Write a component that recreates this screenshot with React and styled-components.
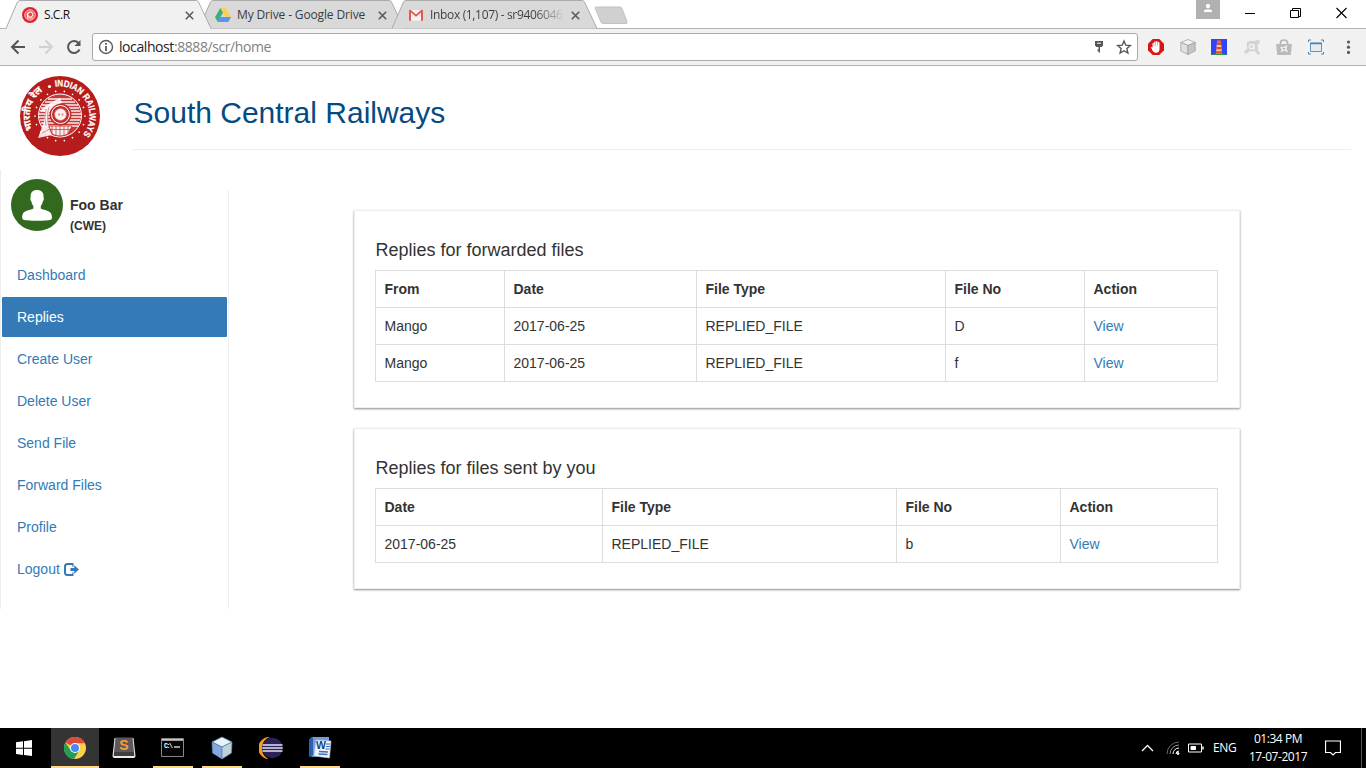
import React from "react";
import styled, { createGlobalStyle } from "styled-components";

const GlobalStyle = createGlobalStyle`
  *, *::before, *::after { box-sizing: border-box; }
  html, body { margin: 0; padding: 0; background: #fff; overflow: hidden; }
  body { font-family: "Liberation Sans", Arial, sans-serif; font-size: 14px; line-height: 20px; color: #333; }
  svg { display: block; flex: none; }
`;

const uiFont = `"Open Sans", "Noto Sans", sans-serif`;

const Screen = styled.div`
  width: 1366px;
  height: 768px;
  display: flex;
  flex-direction: column;
`;

/* ---------- browser window ---------- */

const TabStrip = styled.header`
  height: 29px;
  display: flex;
  align-items: flex-start;
  padding-left: 6px;
  border-bottom: 1px solid #b3b3b3;
  background: #fff;
`;

const TabBox = styled.div`
  position: relative;
  z-index: ${(p) => (p.$active ? 3 : 1)};
  width: 205px;
  height: 29px;
  flex: none;
  margin-right: -12px;
  padding: 1px 0 0 16px;
  display: flex;
  align-items: center;
`;

const TabShape = styled.svg`
  position: absolute;
  left: 0;
  top: 0;
  z-index: -1;
`;

const TabTitle = styled.span`
  width: 133px;
  margin-left: 6px;
  font: 12px/16px ${uiFont};
  letter-spacing: ${(p) => p.$spacing};
  color: ${(p) => (p.$active ? "#111" : "#3c3c3c")};
  white-space: nowrap;
  ${(p) => p.$fade && `
    color: transparent;
    background: linear-gradient(90deg, #3c3c3c 105px, rgba(60, 60, 60, 0.1) 132px);
    background-clip: text;
    -webkit-background-clip: text;
  `}
`;

const TabClose = styled.svg`
  margin-left: 7.5px;
`;

const NewTab = styled.svg`
  margin: 6px 0 0 8px;
`;

const WindowControls = styled.div`
  margin-left: auto;
  height: 28px;
  display: flex;
  align-items: flex-start;
`;

const UserBadge = styled.div`
  width: 24px;
  height: 19px;
  background: #b1b1b1;
  margin-right: 25px;
`;

const ControlIcon = styled.svg`
  margin: 7px ${(p) => p.$gap}px 0 0;
`;

const Toolbar = styled.div`
  height: 37px;
  display: flex;
  align-items: center;
  background: #f1f1f1;
  border-bottom: 1px solid #b3b3b3;
  padding: 0 9px 0 10px;
`;

const NavButtons = styled.div`
  width: 82px;
  display: flex;
  gap: 12px;
`;

const AddressBar = styled.div`
  width: 1046px;
  height: 28px;
  display: flex;
  align-items: center;
  padding: 0 5px;
  background: #fff;
  border: 1px solid #a9a9a9;
  border-radius: 3px;
`;

const Url = styled.div`
  margin-left: 5px;
  font: 14px/20px ${uiFont};
  letter-spacing: -0.42px;
  color: #808080;
  flex: 1;
  b { font-weight: 400; color: #222; }
`;

const BarIcon = styled.svg`
  margin-left: 9px;
`;

const Extensions = styled.div`
  flex: 1;
  display: flex;
  align-items: center;
  justify-content: space-between;
  padding-left: 10px;
`;

/* ---------- page ---------- */

const Page = styled.main`
  height: 662px;
  background: #fff;
`;

const Banner = styled.div`
  display: flex;
  height: 104px;
  padding: 10px 15px 0 20px;
`;

const BannerTitle = styled.h1`
  flex: 1;
  height: 74px;
  margin: 0 0 0 33px;
  padding: 20px 0 0 0.5px;
  font-size: 30px;
  line-height: 33px;
  font-weight: 400;
  color: #044a83;
  border-bottom: 1px solid #eee;
`;

const Body = styled.div`
  display: flex;
  align-items: flex-start;
`;

const Sidebar = styled.aside`
  width: 229px;
  height: 439px;
  padding: 9px 0 0 1px;
  border-left: 1px solid #eee;
  background: linear-gradient(#eee, #eee) right 20px / 1px 419px no-repeat;
`;

const Profile = styled.div`
  display: flex;
  height: 76px;
  padding-left: 9px;
`;

const ProfileName = styled.div`
  margin: 16px 0 0 7px;
  font-weight: 700;
  small { display: block; font-size: 12px; line-height: 22px; }
`;

const NavList = styled.nav`
  display: flex;
  flex-direction: column;
  gap: 2px;
`;

const NavItem = styled.a`
  display: flex;
  align-items: center;
  width: 225px;
  height: 40px;
  padding-left: 15px;
  border-radius: 1px;
  color: ${(p) => (p.$active ? "#fff" : "#337ab7")};
  background: ${(p) => (p.$active ? "#337ab7" : "transparent")};
  svg { margin-left: 4px; }
`;

const Content = styled.section`
  width: 886px;
  margin: 40px 0 0 125px;
  display: flex;
  flex-direction: column;
  gap: 20px;
`;

const Card = styled.article`
  height: ${(p) => p.$height}px;
  padding: 29px 21px 0;
  background: #fff;
  border: 1px solid #eee;
  box-shadow: 0 1px 2px rgba(0, 0, 0, 0.45);
`;

const CardTitle = styled.h4`
  margin: 0 0 10px -0.5px;
  font-size: 18px;
  line-height: 20px;
  font-weight: 400;
`;

const Table = styled.table`
  width: 843px;
  margin-left: -1px;
  table-layout: fixed;
  border-collapse: separate;
  border-spacing: 0;
  border: solid #ddd;
  border-width: 1px 0 0 1px;
`;

const Cell = styled.td`
  width: ${(p) => (p.$width ? `${p.$width}px` : "auto")};
  height: 37px;
  padding: 8px 8px 8px 8.5px;
  text-align: left;
  font-weight: ${(p) => (p.as === "th" ? 700 : 400)};
  border: solid #ddd;
  border-width: 0 1px 1px 0;
`;

const Link = styled.a`
  color: #337ab7;
`;

/* ---------- taskbar ---------- */

const Taskbar = styled.footer`
  height: 40px;
  display: flex;
  background: #000;
  color: #fff;
  font: 12px/18px ${uiFont};
`;

const Task = styled.div`
  width: ${(p) => p.$width}px;
  margin-left: ${(p) => p.$gap}px;
  height: 40px;
  display: flex;
  align-items: center;
  justify-content: center;
  padding-top: 1px;
  background: ${(p) => (p.$active ? "#343434" : "none")};
  border-bottom: 2px solid ${(p) => (p.$open ? "#ffd983" : "transparent")};
`;

const Tray = styled.div`
  margin-left: auto;
  display: flex;
  align-items: center;
  padding-right: 4px;
`;

const Language = styled.span`
  width: 25px;
  margin-left: 9px;
  letter-spacing: -0.3px;
`;

const Clock = styled.div`
  width: 66px;
  margin-left: 7px;
  text-align: center;
  white-space: nowrap;
  letter-spacing: -0.45px;
`;

const Notifications = styled.svg`
  margin: 0 20px 0 14px;
`;

const ShowDesktop = styled.i`
  width: 1px;
  height: 40px;
  background: #555;
`;

/* ---------- drawings ---------- */

const RailwayLogo = () => {
  const dots = Array.from({ length: 18 }, (_, i) => (i * 20 * Math.PI) / 180);
  return (
    <svg width="80" height="80" viewBox="0 0 80 80">
      <circle cx="40" cy="40" r="40" fill="#b71c1c" />
      <defs>
        <path id="ringRight" d="M35.200 10.700 A29.800 29.800 0 0 1 61 61" />
        <path id="ringLeft" d="M13 53.500 A30 30 0 0 1 30 11.500" />
      </defs>
      <g fill="#fff" stroke="#fff" strokeWidth=".25" fontWeight="700" fontFamily="Liberation Sans, sans-serif">
        <text fontSize="9.200">
          <textPath href="#ringRight" textLength="71" lengthAdjust="spacingAndGlyphs">INDIAN RAILWAYS</textPath>
        </text>
        <text fontSize="9.600" fontFamily="Noto Sans, FreeSans, sans-serif">
          <textPath href="#ringLeft">भारतीय रेल</textPath>
        </text>
      </g>
      <circle cx="29.500" cy="10.500" r="1.600" fill="#fff" />
      {dots.map((a) => (
        <circle key={a} cx={40 + 25 * Math.cos(a)} cy={40 + 25 * Math.sin(a)} r=".85" fill="#fff" />
      ))}
      <circle cx="40" cy="39.5" r="21.5" fill="#c43a3a" stroke="#fff" />
      <path d="M28 23h24M25 26h30M22 29h36M21 32h38M20 35h40M19 38h42M19 41h42M20 44h40M21 47h38M22 50h36" stroke="#fff" strokeWidth="1.3" opacity=".9" />
      <circle cx="40.500" cy="38.500" r="11" fill="#c02c2c" />
      <circle cx="40.500" cy="38.500" r="9" fill="none" stroke="#fff" strokeWidth="1" />
      <circle cx="40.500" cy="38.500" r="6" fill="#fbeeee" stroke="#d46a6a" strokeWidth=".8" />
      <path d="M38 37.500h2v2h-2zM41.500 37.500h2v2h-2z" fill="#b71c1c" opacity=".45" />
      <path d="M29 50h23l-4 8q-8 4-16 0z" fill="#fbeaea" stroke="#b71c1c" strokeWidth=".7" />
      <path d="M32 50v8M36 50v9M40 50v10M44 50v9M48 50v8M30 53.500h21" stroke="#b71c1c" strokeWidth=".6" />
      <path d="M20 35q6-6 12-9l8-4 2 5q-6 1-9 4-5 4-5 13 1 10 4 15l-14 3 3-8 3-8 1-10z" fill="#fff" opacity=".88" />
      <path d="M26 33q-2 9 0 17M29 31q-3 8 0 21M22 57l8-4" stroke="#c94c4c" strokeWidth=".6" fill="none" />
    </svg>
  );
};

const Avatar = () => (
  <svg width="52" height="52" viewBox="0 0 52 52">
    <circle cx="26" cy="26" r="26" fill="#33691e" />
    <path
      fill="#fff"
      d="M26 11c-4.200 0-6.700 2.300-6.300 7-.8.900-.3 3.500.7 4.500.4 2.400 1.200 3.600 2 4.500v2.500c-1.800 1.300-8.500 2-10.200 4.500-1.100 1.700-1.200 4-.7 6.200 1 .900 7.500 1.600 14.500 1.600s13.700-.7 14.700-1.600c.5-2.200.2-4.500-.9-6.200-1.700-2.500-8.200-3.200-10-4.500V27c.7-1 1.600-2.100 2-4.500 1-1 1.500-3.600.7-4.500.4-4.700-2.300-7-6.500-7z"
    />
  </svg>
);

const LogoutIcon = () => (
  <svg width="15" height="13" viewBox="0 0 15 13" fill="#337ab7">
    <path d="M9 1H3.500Q1 1 1 3.500v6Q1 12 3.500 12H9" fill="none" stroke="#337ab7" strokeWidth="2" />
    <path d="M8.200 0h1.300v3.500H8.200zM8.200 9.500h1.300V13H8.200z" />
    <path d="M6.500 5h3.700V2.200L15 6.500 10.200 10.800V8H6.500z" />
  </svg>
);

const ScrFavicon = () => (
  <svg width="16" height="16" viewBox="0 0 16 16">
    <circle cx="8" cy="8" r="8" fill="#e3212b" />
    <circle cx="8" cy="8" r="5.300" fill="#ee6c70" stroke="#f7b1b3" strokeWidth="1" />
    <circle cx="8.300" cy="7.500" r="2.500" fill="#e84850" stroke="#fff" strokeWidth="1" />
    <path d="M5 11h6M5.500 6v5" stroke="#fff" strokeWidth="1" opacity=".8" />
  </svg>
);

const DriveFavicon = () => (
  <svg width="16" height="16" viewBox="0 0 16 16">
    <path d="M5.300 1h5.400L16 10h-5.300z" fill="#fbd04f" />
    <path d="M5.300 1 0 10.200 2.700 15 8 5.700z" fill="#3fae7a" />
    <path d="M5.400 10H16l-2.700 5H2.700z" fill="#5b93ee" />
  </svg>
);

const GmailFavicon = () => (
  <svg width="16" height="16" viewBox="0 0 16 16">
    <path d="M1.500 3h13v10.500h-13z" fill="#f5f2f1" />
    <path d="M1 3.500v10.200h2V5.500l5 4.200 5-4.200v8.200h2V3.500L13.800 2.600 8 7.400 2.200 2.600z" fill="#dc5a50" />
  </svg>
);

function Tab({ active, title, icon, spacing, fade }) {
  return (
    <TabBox $active={active}>
      <TabShape width="206" height="29" viewBox="0 0 206 29">
        <path
          d="M0 28.500 11 3Q12 .5 14 .5H190.500Q192 .5 193 3L205 28.500"
          fill={active ? "#f1f1f1" : "#d9d9d9"}
          stroke="#aaa"
        />
        {active && <path d="M1 28.500H204.500" stroke="#f1f1f1" />}
      </TabShape>
      {icon}
      <TabTitle $active={active} $spacing={spacing} $fade={fade}>{title}</TabTitle>
      <TabClose width="9" height="9" viewBox="0 0 9 9">
        <path d="M.8.800 8.200 8.200M8.200.800.8 8.200" stroke="#5a5a5a" strokeWidth="1.600" />
      </TabClose>
    </TabBox>
  );
}

const ExtensionIcons = () => (
  <Extensions>
    <svg width="16" height="16" viewBox="0 0 16 16">
      <path d="M4.700 0h6.600L16 4.700v6.600L11.300 16H4.700L0 11.300V4.700z" fill="#d91515" />
      <path d="M4.500 8V4.200q.7-.8 1.300 0V7h.3V2.800q.8-.8 1.600 0V7h.3V2.400q.8-.8 1.600 0V7h.3V3.500q.8-.8 1.600 0v6.200q0 3.800-3.500 4-2.500 0-3.500-2.200L3 8.500q.5-1 1.500 0z" fill="#fff" />
    </svg>
    <svg width="16" height="16" viewBox="0 0 16 16" stroke="#999" strokeWidth=".7" strokeLinejoin="round">
      <path d="M8 .5 15.200 3.500 8 6.500 .8 3.500z" fill="#f2f2f2" />
      <path d="M.8 3.500 8 6.500v9L.8 12z" fill="#e0e0e0" />
      <path d="M15.200 3.500 8 6.500v9l7.200-3.500z" fill="#c4c4c4" />
    </svg>
    <svg width="16" height="16" viewBox="0 0 16 16">
      <path d="M0 0h16v16H0z" fill="#3045f5" />
      <path d="M0 16q8-4 16 0z" fill="#2c9c35" />
      <path d="M6 3h4l1 11.500H5z" fill="#f2c9a0" />
      <path d="M5.900 4h4.200l.2 2H5.700zM5.500 8h5l.2 2.300H5.300zM5.100 12.300h5.800l.1 2H5z" fill="#e8452c" />
      <path d="M6 1.500h4V4H6z" fill="#f36b2c" />
    </svg>
    <svg width="18" height="16" viewBox="0 0 18 16">
      <path d="M4 3q4-2 8.500-1 1-2 3-1 2.500 1 1 3l-2 1.500q1 4 0 5.500l2 2q1 2-1 2.500-2 0-3-3-4-1-6.500 0-2 3-4 2-2-1 0-3l2.500-2q-1.500-3-.5-6.500z" fill="#d3d3d3" />
      <circle cx="8.500" cy="7.500" r="2.200" fill="none" stroke="#f4f4f4" strokeWidth="1.300" />
      <path d="M11 5v5h1" stroke="#f4f4f4" strokeWidth="1.200" fill="none" />
    </svg>
    <svg width="16" height="16" viewBox="0 0 16 16">
      <path d="M4.500 6V4q0-3 3.500-3t3.500 3v2" fill="none" stroke="#b5b5b5" strokeWidth="1.700" />
      <path d="M0 5h16l-1.300 11H1.300z" fill="#bababa" />
      <path d="m4 8 3.500 0 4-2-1 3.500 1.500 4-3.500-2-4 2 1.200-3z" fill="#f2f2f2" />
      <circle cx="8" cy="9.800" r="1" fill="#aaa" />
    </svg>
    <svg width="16" height="16" viewBox="0 0 16 16" fill="none">
      <path d="M2.500 4h11v8.500h-11z" fill="#e5edf3" stroke="#6793b8" />
      <path d="M2 4.500h12" stroke="#4485bb" strokeWidth="1.500" />
      <path d="M.5 3V1H3M13 1h2.500v2M.5 13v2H3M13 15h2.500v-2" stroke="#4485bb" strokeWidth="1" />
    </svg>
    <svg width="18" height="16" viewBox="0 0 18 16" fill="#5a5a5a">
      <circle cx="9.500" cy="3" r="1.600" /><circle cx="9.500" cy="8.200" r="1.600" /><circle cx="9.500" cy="13.400" r="1.600" />
    </svg>
  </Extensions>
);

const Browser = () => (
  <>
    <TabStrip>
      <Tab active title="S.C.R" icon={<ScrFavicon />} spacing="-0.45px" />
      <Tab title="My Drive - Google Drive" icon={<DriveFavicon />} spacing="-0.14px" />
      <Tab title="Inbox (1,107) - sr9406046" icon={<GmailFavicon />} spacing="-0.34px" fade />
      <NewTab width="36" height="19" viewBox="0 0 36 19">
        <path d="M3 1H27Q28.500 1 29 2.500l5 13q.5 2-1 2H10Q8.500 17.500 8 16L2.500 3Q1.500 1 3 1z" fill="#d0d0d0" stroke="#c2c2c2" />
      </NewTab>
      <WindowControls>
        <UserBadge>
          <svg width="24" height="19" viewBox="0 0 24 19" fill="#fff">
            <circle cx="12" cy="6" r="2.200" />
            <path d="M8 12V11q0-1.800 4-1.800t4 1.800v1z" />
          </svg>
        </UserBadge>
        <ControlIcon $gap={34} width="11" height="12" viewBox="0 0 11 12"><path d="M0 6.500h10" stroke="#000" /></ControlIcon>
        <ControlIcon $gap={35} width="11" height="12" viewBox="0 0 11 12" fill="none" stroke="#000">
          <path d="M2.500 3V1.500h8v8H9M.5 3.500h8v7h-8z" />
        </ControlIcon>
        <ControlIcon $gap={19} width="11" height="12" viewBox="0 0 11 12"><path d="m.5 1 10 10m0-10-10 10" stroke="#000" strokeWidth="1.100" /></ControlIcon>
      </WindowControls>
    </TabStrip>
    <Toolbar>
      <NavButtons>
        <svg width="16" height="16" viewBox="0 0 16 16" fill="none" stroke="#555" strokeWidth="2"><path d="M15 8H2.500M8.500 1.500 2 8l6.500 6.500" /></svg>
        <svg width="16" height="16" viewBox="0 0 16 16" fill="none" stroke="#d0d0d0" strokeWidth="2"><path d="M1 8h12.500M7.500 1.500 14 8l-6.500 6.500" /></svg>
        <svg width="16" height="16" viewBox="0 0 16 16" fill="none" stroke="#555" strokeWidth="2"><path d="M13.500 10.500A6 6 0 1 1 12.500 4" /><path d="M14.500 1v6h-6z" fill="#555" stroke="none" /></svg>
      </NavButtons>
      <AddressBar>
        <svg width="16" height="16" viewBox="0 0 16 16" fill="none" stroke="#5a5a5a">
          <circle cx="8" cy="8" r="6.500" strokeWidth="1.400" /><path d="M8 7v5M8 4v1.800" strokeWidth="1.800" />
        </svg>
        <Url><b>localhost</b>:8888/scr/home</Url>
        <BarIcon width="16" height="16" viewBox="0 0 16 16" fill="#555">
          <path d="M4 2h8v4.500L10.500 8H9v5.500H7.500V12H6.500v-1.500h1V8h-2L4 6.500z" /><path d="M6 4.200h4" stroke="#fff" />
        </BarIcon>
        <BarIcon width="16" height="16" viewBox="0 0 16 16" fill="none" stroke="#555" strokeWidth="1.400">
          <path d="m8 2 1.800 4.200 4.500.4-3.400 3 1 4.400L8 11.700 4.100 14l1-4.400-3.400-3 4.500-.4z" />
        </BarIcon>
      </AddressBar>
      <ExtensionIcons />
    </Toolbar>
  </>
);

const navItems = ["Dashboard", "Replies", "Create User", "Delete User", "Send File", "Forward Files", "Profile", "Logout"];

const cards = [
  {
    title: "Replies for forwarded files",
    height: 198,
    widths: [129, 192, 249, 139, 133],
    head: ["From", "Date", "File Type", "File No", "Action"],
    rows: [
      ["Mango", "2017-06-25", "REPLIED_FILE", "D"],
      ["Mango", "2017-06-25", "REPLIED_FILE", "f"],
    ],
  },
  {
    title: "Replies for files sent by you",
    height: 161,
    widths: [227, 294, 164, 157],
    head: ["Date", "File Type", "File No", "Action"],
    rows: [["2017-06-25", "REPLIED_FILE", "b"]],
  },
];

const RepliesCard = ({ data }) => (
  <Card $height={data.height}>
    <CardTitle>{data.title}</CardTitle>
    <Table>
      <thead>
        <tr>{data.head.map((h, i) => <Cell as="th" key={h} $width={data.widths[i]}>{h}</Cell>)}</tr>
      </thead>
      <tbody>
        {data.rows.map((row, r) => (
          <tr key={r}>
            {row.map((value, i) => <Cell key={i}>{value}</Cell>)}
            <Cell><Link>View</Link></Cell>
          </tr>
        ))}
      </tbody>
    </Table>
  </Card>
);

const ChromeIcon = () => (
  <svg width="22" height="22" viewBox="0 0 22 22">
    <circle cx="11" cy="11" r="11" fill="#fdd249" />
    <path d="M11 11 1.400 5.600A11 11 0 0 1 20.600 5.600L20.900 6.200H11z" fill="#dd4b3e" />
    <path d="M1.400 5.600A11 11 0 0 0 10 22L15.200 13.500 11 11 6.800 13.500z" fill="#209d5b" />
    <circle cx="11" cy="11" r="5" fill="#fff" />
    <circle cx="11" cy="11" r="4" fill="#4a8af4" />
  </svg>
);

const SublimeIcon = () => (
  <svg width="24" height="22" viewBox="0 0 24 22">
    <path d="M2.500 1h19l2 18q0 2-2 2h-19q-2 0-2-2z" fill="#ececec" />
    <path d="M3.500.5h17l1.500 14.500H2z" fill="#5a5a5a" />
    <path d="M2 15h20l.3 4H1.700z" fill="#3f3f3f" />
    <text x="12" y="13" fill="#fb9b37" textAnchor="middle" fontSize="14" fontWeight="700" fontFamily="Liberation Sans">S</text>
  </svg>
);

const TerminalIcon = () => (
  <svg width="24" height="19" viewBox="0 0 24 19">
    <path d="M.5.500h22v18H.5z" fill="#050505" stroke="#888" />
    <path d="M1 1h21v1.800H1z" fill="#c5c5c5" />
    <text x="3" y="9.500" fill="#fff" fontSize="6.500" fontWeight="700" textLength="9" fontFamily="Liberation Mono">C:\</text>
    <path d="M13 9h6" stroke="#fff" strokeWidth="1.200" />
  </svg>
);

const CubeIcon = () => (
  <svg width="22" height="24" viewBox="0 0 22 24" stroke="#5b83b5" strokeWidth=".7">
    <path d="M11 1 21 6 11 11 1 6z" fill="#e8f3fa" />
    <path d="M1 6 11 11v12L1.500 17z" fill="#86a8dc" />
    <path d="M21 6 11 11v12l9.500-6z" fill="#bcd3dc" />
  </svg>
);

const EclipseIcon = () => (
  <svg width="24" height="22" viewBox="0 0 24 22">
    <path d="M11 0A11 11 0 0 0 9.500 22 12 12 0 0 1 11 0z" fill="#f39a24" />
    <circle cx="13.500" cy="11" r="10.200" fill="#2c2257" />
    <path d="M3.500 8h20M3.200 11h20.500M3.500 14h20" stroke="#e5e2f1" strokeWidth="1.500" />
  </svg>
);

const WordIcon = () => (
  <svg width="24" height="23" viewBox="0 0 24 23">
    <path d="M4 1h17v18L4 21 1 19V4z" fill="#6d9fda" />
    <path d="M1 4 5 1v18l-4 2z" fill="#2b60ac" />
    <path d="m8 4 15 1-1.500 17L6 20z" fill="#eef4fb" stroke="#b2c9e5" strokeWidth=".6" />
    <path d="M11 15.500l9 .5M10.500 18l9 .5" stroke="#456fae" strokeWidth="1.300" />
    <path d="M18 8h4M18 10.500h4M17.500 13h4" stroke="#456fae" strokeWidth="1.200" />
    <text x="8" y="13" fontSize="10.500" fontWeight="700" fill="#183f87" fontFamily="Liberation Sans">W</text>
  </svg>
);

const DesktopTaskbar = () => (
  <Taskbar>
    <Task $width={48} $gap={0}>
      <svg width="16" height="16" viewBox="0 0 16 16" fill="#fff"><path d="M0 2.300 7 1.300v6.400H0zM8 1.200 16 0v7.700H8zM0 8.700h7v6.400l-7-1zM8 8.700h8V16l-8-1.100z" /></svg>
    </Task>
    <Task $width={48} $gap={3} $active $open><ChromeIcon /></Task>
    <Task $width={40} $gap={5}><SublimeIcon /></Task>
    <Task $width={40} $gap={9} $open><TerminalIcon /></Task>
    <Task $width={40} $gap={9} $open><CubeIcon /></Task>
    <Task $width={40} $gap={9}><EclipseIcon /></Task>
    <Task $width={40} $gap={9} $open><WordIcon /></Task>
    <Tray>
      <svg width="13" height="9" viewBox="0 0 13 9"><path d="m1 7 5.500-5.500L12 7" fill="none" stroke="#fff" strokeWidth="1.300" /></svg>
      <svg width="33" height="14" viewBox="0 0 33 14" fill="none" stroke="#fff">
        <path d="M13 13A12 12 0 0 1 25 1" stroke="#666" /><path d="M16 13a9 9 0 0 1 9-9" stroke="#999" />
        <path d="M19 13a6 6 0 0 1 6-6" /><path d="M22 13a3 3 0 0 1 3-3" /><circle cx="24" cy="12.500" r="1" fill="#fff" />
      </svg>
      <svg width="17" height="10" viewBox="0 0 17 10" fill="none" stroke="#fff"><path d="M1.500 1h13v8h-13z" /><path d="M4 3.500h4.500v3H4z" fill="#fff" /><path d="M16 3.500v3" strokeWidth="1.500" /></svg>
      <Language>ENG</Language>
      <Clock><div>01:34 PM</div><div>17-07-2017</div></Clock>
      <Notifications width="16" height="16" viewBox="0 0 16 16"><path d="M.5 1h15v11.500h-5L8 15l-2.500-2.500h-5z" fill="none" stroke="#fff" strokeWidth="1.200" /></Notifications>
      <ShowDesktop />
    </Tray>
  </Taskbar>
);

export default function App() {
  return (
    <Screen>
      <GlobalStyle />
      <Browser />
      <Page>
        <Banner>
          <RailwayLogo />
          <BannerTitle>South Central Railways</BannerTitle>
        </Banner>
        <Body>
          <Sidebar>
            <Profile>
              <Avatar />
              <ProfileName>Foo Bar<small>(CWE)</small></ProfileName>
            </Profile>
            <NavList>
              {navItems.map((name) => (
                <NavItem key={name} $active={name === "Replies"}>
                  {name}{name === "Logout" && <LogoutIcon />}
                </NavItem>
              ))}
            </NavList>
          </Sidebar>
          <Content>
            {cards.map((data) => <RepliesCard key={data.title} data={data} />)}
          </Content>
        </Body>
      </Page>
      <DesktopTaskbar />
    </Screen>
  );
}
